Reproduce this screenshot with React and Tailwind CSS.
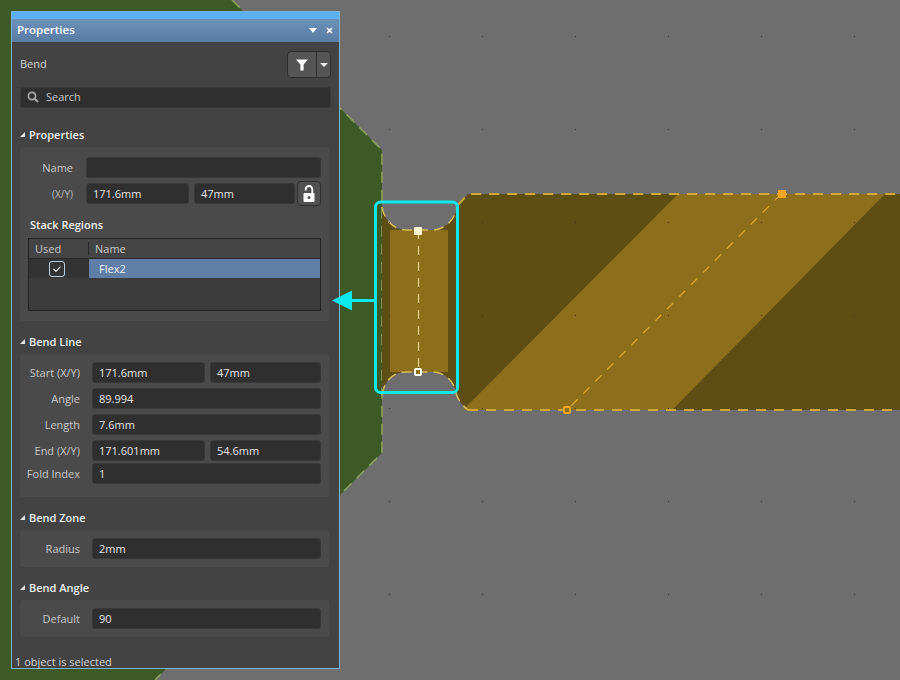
const GRID_X = [389, 482, 575, 668, 761, 854];
const GRID_Y = [36, 129, 222, 315, 408, 501, 594];

function Board() {
  return (
    <svg className="absolute inset-0" width="900" height="680" viewBox="0 0 900 680">
      <rect width="900" height="680" fill="#6e6e6e" />
      {/* rigid region */}
      <polygon points="0,0 232,0 382,150 382,453 155,680 0,680" fill="#3d5a26" />
      <path d="M232 0 L382 150 L382 453 L155 680" fill="none" stroke="#8ea35c" strokeWidth="1.5" strokeDasharray="11 7" />

      {/* flex region */}
      <path d="M382 207 C384 220 394 230 406 230 L432 230 C446 230 456 218 457 206 L468 194 L900 194 L900 410 L468 410 C462 405 458 400 456 393 C454 380 444 372 432 372 L406 372 C392 372 384 382 382 395 Z" fill="#5f4e14" />
      <rect x="390" y="230" width="58" height="142" fill="#8d6f1b" />
      <polygon points="678,194 885,194 672,410 463,410" fill="#8d6f1b" />

      <path d="M382 207 C384 220 394 230 406 230 L432 230 C446 230 456 218 457 206" fill="none" stroke="#d9bd5c" strokeWidth="1.5" strokeDasharray="10 6" />
      <path d="M382 395 C384 382 392 372 406 372 L432 372 C444 372 454 380 456 393 C458 400 462 405 468 410" fill="none" stroke="#d9bd5c" strokeWidth="1.5" strokeDasharray="10 6" />
      <path d="M458 205 L468 194 L900 194" fill="none" stroke="#cfa938" strokeWidth="2" strokeDasharray="10 8" />
      <path d="M468 410 L900 410" fill="none" stroke="#cfa938" strokeWidth="2" strokeDasharray="10 8" />
      <line x1="781" y1="194" x2="567" y2="410" stroke="#dba72c" strokeWidth="1.25" strokeDasharray="9 8" />
      <line x1="418.5" y1="230" x2="418.5" y2="372" stroke="#e3cd8c" strokeWidth="1.25" strokeDasharray="9 7" />

      {GRID_X.flatMap((x) =>
        GRID_Y.map((y) => <rect key={`${x}-${y}`} x={x} y={y} width="1" height="1" fill="#2b2b2b" opacity="0.7" />)
      )}

      <rect x="778" y="190" width="8" height="8" rx="1" fill="#f5a623" />
      <rect x="564" y="407" width="6" height="6" rx="1" fill="#8d6f1b" stroke="#f5a623" strokeWidth="2" />
      <rect x="414" y="227" width="8" height="8" rx="1" fill="#fff3d0" />
      <rect x="415" y="369" width="6" height="6" rx="1" fill="#8d6f1b" stroke="#ffffff" strokeWidth="2" />

      {/* highlight box */}
      <rect x="375.5" y="202" width="82" height="190.5" rx="5" fill="none" stroke="#0deaee" strokeWidth="3" />
    </svg>
  );
}

function Arrow() {
  return (
    <svg className="absolute left-[330px] top-[285px]" width="46" height="30" viewBox="0 0 46 30">
      <line x1="20" y1="15.5" x2="45" y2="15.5" stroke="#0deaee" strokeWidth="3" />
      <polygon points="2,15.5 22,5.5 22,25.5" fill="#0deaee" />
    </svg>
  );
}

function Field({ value, className = 'flex-1' }) {
  return (
    <div className={`h-[21px] min-w-0 rounded-[3px] bg-[#2f2f2f] border border-[#393939] flex items-center px-[6px] text-[#e4e4e4] ${className}`}>
      {value}
    </div>
  );
}

function Row({ label, children }) {
  return (
    <div className="flex items-center">
      <span className="w-[60px] text-right text-[#c8c8c8] whitespace-nowrap shrink-0">{label}</span>
      <div className="ml-[12px] flex-1 flex gap-[5px]">{children}</div>
    </div>
  );
}

function Section({ title, children, className = 'mt-[13px]' }) {
  return (
    <div className={className}>
      <div className="h-[16px] pb-[2px] flex items-center gap-[4px] text-[#f0f0f0] font-semibold">
        <svg width="5" height="5" viewBox="0 0 5 5" className="shrink-0">
          <polygon points="5,0 5,5 0,5" fill="#e6e6e6" />
        </svg>
        {title}
      </div>
      <div className="mt-[4px] mr-[2px] bg-[#4a4a4a] rounded-[3px] pr-[8px]">{children}</div>
    </div>
  );
}

function FilterButton() {
  return (
    <div className="w-[44px] h-[27px] rounded-[4px] border border-[#2e2e2e] bg-[#555555] flex">
      <div className="w-[29px] flex items-center justify-center border-r border-[#2e2e2e]">
        <svg width="12" height="12" viewBox="0 0 12 12">
          <path d="M0 0.5 H12 L7.6 5.5 V11.5 H4.4 V5.5 Z" fill="#ffffff" />
        </svg>
      </div>
      <div className="flex-1 flex items-center justify-center">
        <svg width="8" height="4" viewBox="0 0 8 4">
          <polygon points="0,0 8,0 4,4" fill="#eeeeee" />
        </svg>
      </div>
    </div>
  );
}

function PropertiesPanel() {
  return (
    <div className="absolute left-[11px] top-[11px] w-[329px] h-[658px] border border-[#79b4d8] bg-[#434343] flex flex-col text-[11px] leading-none font-['Open_Sans','Noto_Sans',sans-serif]">
      <div className="h-[7px] bg-[#5cb0f2] shrink-0" />
      <div className="h-[23px] shrink-0 bg-gradient-to-b from-[#6c91b8] to-[#5a7ca4] flex items-center justify-between pl-[5px] pr-[6px] text-white font-semibold text-[11.5px]">
        <span className="pb-[2px]">Properties</span>
        <div className="flex items-center gap-[9px]">
          <svg width="8" height="5" viewBox="0 0 8 5">
            <polygon points="0,0 8,0 4,5" fill="#ffffff" />
          </svg>
          <svg width="7" height="7" viewBox="0 0 7 7">
            <path d="M1 1 L6 6 M6 1 L1 6" stroke="#ffffff" strokeWidth="1.7" />
          </svg>
        </div>
      </div>

      <div className="flex-1 flex flex-col pl-[8px] pr-[8px]">
        <div className="mt-[9px] flex items-center justify-between text-[#d2d2d2]">
          <span className="pb-[2px]">Bend</span>
          <FilterButton />
        </div>

        <div className="mt-[9px] h-[21px] pb-[2px] rounded-[3px] bg-[#2f2f2f] border border-[#393939] flex items-center pl-[6px] gap-[7px] text-[#c4c4c4]">
          <svg width="12" height="12" viewBox="0 0 12 12">
            <circle cx="5" cy="5" r="3.6" fill="none" stroke="#a8a8a8" strokeWidth="1.7" />
            <path d="M7.8 7.8 L11 11" stroke="#a8a8a8" strokeWidth="2.2" />
          </svg>
          Search
        </div>

        <Section title="Properties" className="mt-[19px]">
          <div className="pt-[10px] pb-[10px] pl-[8px]">
            <div className="flex items-center">
              <span className="w-[45px] text-right text-[#c8c8c8]">Name</span>
              <Field value="" className="ml-[13px] flex-1" />
            </div>
            <div className="mt-[5px] flex items-center">
              <span className="w-[45px] text-right text-[#b8b8b8] text-[10px]">(X/Y)</span>
              <Field value="171.6mm" className="ml-[13px] w-[103px] shrink-0" />
              <Field value="47mm" className="ml-[5px] w-[101px] shrink-0" />
              <div className="ml-[2px] -my-[2px] w-[24px] h-[25px] rounded-[4px] border border-[#2e2e2e] bg-[#505050] flex items-center justify-center">
                <svg width="12" height="18" viewBox="0 0 12 18">
                  <path d="M2.7 5.5 V4.3 A3.3 3.3 0 0 1 9.3 4.3 V8" fill="none" stroke="#ffffff" strokeWidth="1.8" />
                  <path fillRule="evenodd" d="M1.5 8 H10.5 A1 1 0 0 1 11.5 9 V16 A1 1 0 0 1 10.5 17 H1.5 A1 1 0 0 1 0.5 16 V9 A1 1 0 0 1 1.5 8 Z M6 11 A1.5 1.5 0 1 0 6 14 A1.5 1.5 0 1 0 6 11 Z" fill="#ffffff" />
                </svg>
              </div>
            </div>

            <div className="mt-[13px] h-[16px] pb-[2px] pl-[2px] flex items-center text-[#f0f0f0] font-semibold">Stack Regions</div>
            <div className="mt-[5px] h-[73px] border border-[#232323] bg-[#3c3c3c]">
              <div className="h-[20px] flex items-center bg-[#444444] text-[#c8c8c8] border-b border-[#2a2a2a]">
                <span className="w-[60px] pl-[6px] border-r border-[#2a2a2a] leading-[13px]">Used</span>
                <span className="pl-[6px]">Name</span>
              </div>
              <div className="h-[19px] flex">
                <div className="w-[60px] pr-[4px] bg-[#333333] flex items-center justify-center">
                  <div className="w-[16px] h-[16px] rounded-[3px] border border-[#b8cfe0] flex items-center justify-center">
                    <svg width="8" height="6" viewBox="0 0 8 6">
                      <path d="M0.5 3 L3 5.3 L7.5 0.7" fill="none" stroke="#eef2f6" strokeWidth="1.2" />
                    </svg>
                  </div>
                </div>
                <div className="flex-1 bg-[#5f7fa6] flex items-center pl-[10px] text-[#f2f2f2]">Flex2</div>
              </div>
            </div>
          </div>
        </Section>

        <Section title="Bend Line">
          <div className="pt-[8px] pb-[13px]">
            <div className="flex flex-col gap-[5px]">
              <Row label="Start (X/Y)">
                <Field value="171.6mm" className="w-[113px] shrink-0" />
                <Field value="47mm" />
              </Row>
              <Row label="Angle"><Field value="89.994" /></Row>
              <Row label="Length"><Field value="7.6mm" /></Row>
              <Row label="End (X/Y)">
                <Field value="171.601mm" className="w-[113px] shrink-0" />
                <Field value="54.6mm" />
              </Row>
            </div>
            <div className="mt-[2px]">
              <Row label="Fold Index"><Field value="1" /></Row>
            </div>
          </div>
        </Section>

        <Section title="Bend Zone">
          <div className="py-[8px]">
            <Row label="Radius"><Field value="2mm" /></Row>
          </div>
        </Section>

        <Section title="Bend Angle">
          <div className="py-[8px]">
            <Row label="Default"><Field value="90" /></Row>
          </div>
        </Section>
      </div>

      <div className="h-[15px] pt-[2px] pl-[3px] flex items-center text-[#d2d2d2] whitespace-nowrap">1 object is selected</div>
    </div>
  );
}

export default function App() {
  return (
    <div className="relative w-[900px] h-[680px] overflow-hidden">
      <Board />
      <PropertiesPanel />
      <Arrow />
    </div>
  );
}
